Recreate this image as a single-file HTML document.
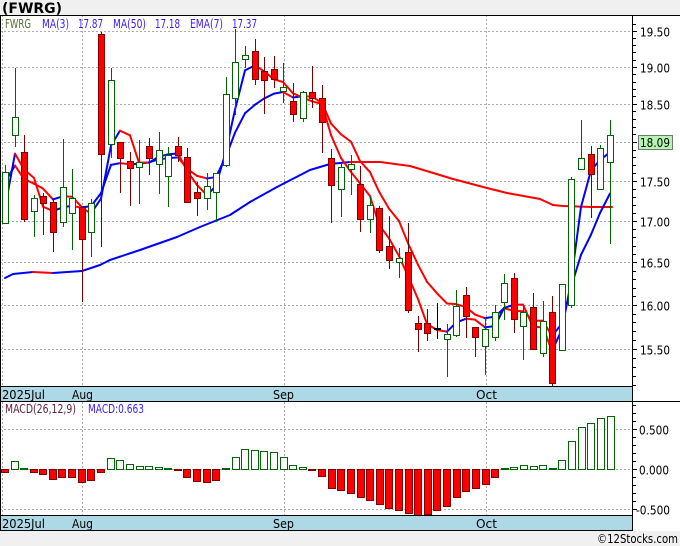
<!DOCTYPE html>
<html><head><meta charset="utf-8"><style>
html,body{margin:0;padding:0;background:#f0f0f0;width:680px;height:546px;overflow:hidden;font-family:"Liberation Sans","DejaVu Sans",sans-serif}
svg text{font-family:"DejaVu Sans","Liberation Sans",sans-serif}
</style></head><body>
<svg id="s" width="680" height="546" xmlns="http://www.w3.org/2000/svg"></svg>
<script>
var s=document.getElementById('s');var h='';
function T(x,y,t,sz,col,len){return '<text x="'+x+'" y="'+y+'" font-size="'+sz+'" fill="'+col+'"'+(len?' textLength="'+len+'" lengthAdjust="spacingAndGlyphs"':'')+'>'+t+'</text>';}
function Y(p){return 31+(Math.log(19.5)-Math.log(p))*1385;}
h+='<rect x="0" y="15" width="680" height="516" fill="#fff"/>';
h+='<text x="2" y="13" font-size="14" font-weight="bold" fill="#000">(FWRG)</text>';
for(var p=15.5;p<=19.51;p+=0.5){var y=Math.round(Y(p))+0.5;h+='<line x1="0" y1="'+y+'" x2="632" y2="'+y+'" stroke="#aaa" stroke-dasharray="2,2"/>';
h+='<line x1="632" y1="'+y+'" x2="637" y2="'+y+'" stroke="#000"/>'+T(640,y+5,p.toFixed(2),12,'#000',30);}
for(var p=15.1;p<=19.7;p+=0.1){var y=Math.round(Y(p))+0.5;if(y>16&&y<386)h+='<line x1="632" y1="'+y+'" x2="636" y2="'+y+'" stroke="#000"/>';}
[2.5,82.5,284.5,486.5].forEach(function(x){h+='<line x1="'+x+'" y1="15" x2="'+x+'" y2="387" stroke="#aaa" stroke-dasharray="2,2"/><line x1="'+x+'" y1="402" x2="'+x+'" y2="515" stroke="#aaa" stroke-dasharray="2,2"/>';});
[429,469,509].forEach(function(y,i){y+=0.5;h+='<line x1="0" y1="'+y+'" x2="632" y2="'+y+'" stroke="#aaa" stroke-dasharray="2,2"/><line x1="632" y1="'+y+'" x2="637" y2="'+y+'" stroke="#000"/>'+T(i==2?636:639,y+5,['0.500','0.000','-0.500'][i],12,'#000',i==2?34:30);});
for(var y=405;y<515;y+=8){h+='<line x1="632" y1="'+(y+0.5)+'" x2="636" y2="'+(y+0.5)+'" stroke="#000"/>';}
var C=[[1,223,172,165,223],[1,135,117,68,147],[0,152,219,135,222],[1,211,198,195,237],[0,196,203,193,235],[0,202,232,200,252],[1,222,187,139,227],[1,213,198,169,250],[0,207,239,207,302],[1,232,203,199,257],[0,34,154,32,247],[1,144,80,68,158],[0,142,158,142,193],[0,161,168,152,206],[1,167,162,140,204],[0,146,158,138,175],[1,164,150,132,194],[1,176,155,147,207],[0,146,155,137,162],[0,157,202,148,202],[0,192,198,182,216],[1,198,186,173,210],[1,192,173,173,222],[1,165,94,77,167],[1,98,62,29,115],[1,59,55,46,68],[0,51,79,39,85],[0,71,80,57,114],[0,69,79,56,88],[1,91,87,63,103],[0,101,114,83,122],[1,118,92,91,122],[0,92,98,66,108],[0,98,122,85,153],[0,158,185,149,223],[1,189,167,164,217],[1,169,164,155,195],[0,184,219,166,232],[1,219,205,197,233],[0,208,250,206,253],[0,246,260,216,269],[1,262,258,248,278],[0,252,310,223,313],[0,323,329,316,352],[0,323,333,309,341],[2,328,328,303,339],[1,339,334,324,377],[1,335,306,290,337],[0,295,316,287,338],[0,327,337,327,357],[1,346,329,317,375],[1,337,312,305,341],[1,302,283,274,320],[0,278,319,273,333],[1,326,312,307,360],[0,307,349,293,350],[1,353,321,301,357],[0,312,383,296,387],[1,350,284,284,350],[1,305,179,177,308],[1,169,158,120,169],[0,154,174,146,218],[1,189,148,145,189],[1,162,135,120,244]];
function X(i){return Math.round(5+i*9.6);}
function seg(pts,col){var o='';for(var i=1;i<pts.length;i++){var c=col?col:(pts[i][1]<pts[i-1][1]-0.01?'#0000ff':'#ff0000');o+='<line x1="'+pts[i-1][0]+'" y1="'+pts[i-1][1]+'" x2="'+pts[i][0]+'" y2="'+pts[i][1]+'" stroke="'+c+'" stroke-width="2" stroke-linecap="round"/>';}return o;}
var m50=[[5,278],[13,274],[33,272],[53,273],[82,271],[100,265],[110,260],[140,250],[177,237],[200,227],[230,215],[250,202],[277,187],[310,170],[330,164],[350,162],[380,162],[410,166],[430,172],[453,179],[487,188],[507,193],[540,199],[553,205],[563,206],[592,207],[612,207]];
h+=seg(m50);
var cl=C.map(function(c){return c[2];});
var ma=[[5,208]];for(var i=1;i<cl.length;i++){var a=cl[i],b=cl[i-1],c=i>1?cl[i-2]:cl[i-1];ma.push([X(i),(a+b+c)/3]);}
var e=[],v=185;for(var i=0;i<cl.length;i++){v=v+(cl[i]-v)*0.25;e.push([X(i),v]);}
h+=seg(e);h+=seg(ma);
C.forEach(function(c,i){var x=X(i);var t=Math.min(c[1],c[2]),b=Math.max(c[1],c[2]);
var col=c[0]==1?'#006400':(c[0]==0?'#800000':'#000');
h+='<line x1="'+(x+0.5)+'" y1="'+c[3]+'" x2="'+(x+0.5)+'" y2="'+c[4]+'" stroke="'+col+'"/>';
if(b-t<1)b=t+1;
h+='<rect x="'+(x-3+0.5)+'" y="'+(t+0.5)+'" width="6" height="'+(b-t)+'" fill="'+(c[0]==1?'#fff':(c[0]==0?'#ff0000':'#000'))+'" stroke="'+col+'"/>';});
h+=T(5,28,'FWRG',12,'#556b2f',26)+T(42,28,'MA(3)',12,'#3a1aff',27)+T(78,28,'17.87',12,'#3a1aff',25)+T(113,28,'MA(50)',12,'#3a1aff',33)+T(155,28,'17.18',12,'#3a1aff',25)+T(190,28,'EMA(7)',12,'#3a1aff',33)+T(232,28,'17.37',12,'#3a1aff',25);
var M=[[5,472],[15,461],[24,468],[34,472],[43,474],[53,479],[62,477],[72,477],[82,482],[91,480],[101,472],[111,458],[120,460],[130,464],[140,466],[149,466],[159,467],[168,468],[178,470],[187,477],[197,481],[207,482],[216,480],[226,468],[236,457],[245,449],[255,450],[264,451],[274,452],[284,457],[293,465],[303,467],[312,470],[322,476],[332,488],[341,490],[351,493],[361,497],[370,500],[380,504],[389,508],[399,510],[409,513],[418,515],[428,514],[437,510],[447,506],[457,497],[466,491],[476,488],[486,484],[495,477],[505,468],[514,467],[524,465],[534,466],[543,465],[553,468],[562,460],[572,441],[582,427],[591,423],[601,418],[611,416]];
M.forEach(function(m){var x=m[0];if(m[1]>469){h+='<rect x="'+(x-3.5)+'" y="469.5" width="7" height="'+(m[1]-469)+'" fill="#ff0000" stroke="#800000"/>';}else{h+='<rect x="'+(x-3.5)+'" y="'+(m[1]+0.5)+'" width="7" height="'+(469-m[1])+'" fill="#fff" stroke="#006400"/>';}});
h+=T(5,413,'MACD(26,12,9)',12,'#602040',71)+T(88,413,'MACD:0.663',12,'#3a1aff',56);
[[387,401],[516,530]].forEach(function(b){h+='<rect x="0" y="'+b[0]+'" width="632" height="'+(b[1]-b[0])+'" fill="#add8e6"/><line x1="0" y1="'+(b[0]-0.5)+'" x2="632" y2="'+(b[0]-0.5)+'" stroke="#000"/><line x1="0" y1="'+(b[1]+0.5)+'" x2="632" y2="'+(b[1]+0.5)+'" stroke="#000"/>';
[['2025Jul',2,43],['Aug',72,21],['Sep',273,21],['Oct',476,21]].forEach(function(l){h+=T(l[1],b[0]+12,l[0],12,'#000',l[2]);});});
h+='<line x1="0" y1="401.5" x2="680" y2="401.5" stroke="#000"/>';
h+='<line x1="0" y1="15.5" x2="680" y2="15.5" stroke="#000"/><line x1="0.5" y1="15" x2="0.5" y2="531" stroke="#000"/><line x1="632.5" y1="15" x2="632.5" y2="531" stroke="#000"/>';
h+='<rect x="638.5" y="135.5" width="34" height="14" fill="#b4f5b4" stroke="#000" stroke-width="0.5"/>'+T(640,147,'18.09',12,'#000',30);
h+=T(597,543,'©12Stocks.com',12,'#000',81);
s.innerHTML=h;
</script>
</body></html>
